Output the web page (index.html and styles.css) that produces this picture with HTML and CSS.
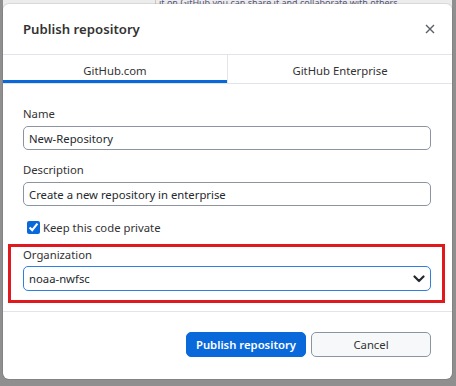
FILE: index.html
```html
<!DOCTYPE html>
<html lang="en">
<head>
    <meta charset="UTF-8">
    <meta name="viewport" content="width=device-width, initial-scale=1.0">
    <title>Publish repository</title>
    <link rel="stylesheet" href="styles.css">
</head>
<body>

<div class="backdrop">
    <div class="behind">
        <p>it on GitHub you can share it and collaborate with others.</p>
    </div>
</div>

<div class="dialog">
    <div class="dialog-header">
        <h1>Publish repository</h1>
        <button class="close" aria-label="Close">
            <svg width="10" height="10" viewBox="0 0 10 10">
                <path d="M1 1L9 9M9 1L1 9" stroke="#586069" stroke-width="1.4" fill="none"/>
            </svg>
        </button>
    </div>

    <div class="tabs">
        <div class="tab active">GitHub.com</div>
        <div class="tab">GitHub Enterprise</div>
    </div>

    <div class="dialog-body">
        <label class="field-label" for="name">Name</label>
        <input class="text-input" id="name" type="text" value="New-Repository">

        <label class="field-label" for="description">Description</label>
        <input class="text-input" id="description" type="text" value="Create a new repository in enterprise">

        <label class="check-row">
            <input type="checkbox" checked>
            <span>Keep this code private</span>
        </label>

        <div class="highlight">
            <label class="field-label" for="org">Organization</label>
            <div class="select">
                <span>noaa-nwfsc</span>
                <svg width="12" height="8" viewBox="0 0 12 8">
                    <path d="M1.5 1.5L6 6L10.5 1.5" stroke="#24292e" stroke-width="2.2" fill="none" stroke-linecap="round" stroke-linejoin="round"/>
                </svg>
            </div>
        </div>
    </div>

    <div class="dialog-footer">
        <button class="btn btn-primary">Publish repository</button>
        <button class="btn">Cancel</button>
    </div>
</div>

</body>
</html>
```

FILE: styles.css
```css
body {
    margin: 0;
    font-family: "Noto Sans", "Open Sans", sans-serif;
    font-size: 11.3px;
    color: #24292e;
    background: #8f8f8f;
}
.backdrop {
    height: 386px;
    padding: 0 4px 0 3px;
}
.behind {
    height: 10px;
    overflow: hidden;
    background: #ececec;
}
.behind p {
    margin: -3px 0 0 152px;
    font-size: 9px;
    line-height: 12px;
    white-space: nowrap;
    color: #55557a;
    border-left: 1px solid #c8c8c8;
    padding-left: 3px;
}
.dialog {
    position: absolute;
    left: 3px;
    top: 4px;
    width: 449px;
    height: 375px;
    background: #fff;
    border-radius: 6px;
    box-shadow: 0 0 0 1px rgba(0, 0, 0, 0.08);
    display: flex;
    flex-direction: column;
}
.dialog-header {
    height: 50px;
    display: flex;
    align-items: center;
    justify-content: space-between;
    padding: 0 15px 0 20px;
    border-bottom: 1px solid #e1e4e8;
}
.dialog-header h1 {
    margin: 0;
    font-size: 13.2px;
    font-weight: 600;
    color: #333;
}
.close {
    border: none;
    background: none;
    padding: 0;
    width: 14px;
    height: 14px;
    display: flex;
    align-items: center;
    justify-content: center;
}
.tabs {
    display: flex;
    height: 28px;
    border-bottom: 1px solid #e1e4e8;
}
.tab {
    flex: 1;
    display: flex;
    align-items: center;
    justify-content: center;
    color: #333;
    padding-top: 2px;
}
.tab.active {
    flex: 0 0 224px;
    border-right: 1px solid #e1e4e8;
    box-shadow: inset 0 -3px 0 #0969da;
}
.dialog-body {
    padding: 22px 21px 0 20px;
    display: flex;
    flex-direction: column;
    height: 228px;
    border-bottom: 1px solid #e1e4e8;
    box-sizing: border-box;
}
.field-label {
    line-height: 16px;
    color: #333;
    margin-bottom: 4px;
}
.text-input {
    height: 24px;
    box-sizing: border-box;
    border: 1px solid #8c959f;
    border-radius: 5px;
    padding: 0 5px;
    font: inherit;
    color: #24292e;
    margin-bottom: 12px;
}
.check-row {
    display: flex;
    align-items: center;
    gap: 3px;
    margin: 2px 0 9px 4px;
    color: #333;
}
.check-row input {
    width: 13px;
    height: 13px;
    margin: 0;
    accent-color: #0969da;
}
.highlight {
    margin: 0 -14px 0 -15px;
    border: 3px solid #e0191e;
    padding: 0 11px 9px 12px;
    display: flex;
    flex-direction: column;
}
.highlight .field-label {
    margin-bottom: 3px;
}
.select {
    height: 25px;
    box-sizing: border-box;
    border: 1px solid #2f7fe0;
    border-radius: 5px;
    display: flex;
    align-items: center;
    justify-content: space-between;
    padding: 0 5px 0 5px;
}
.dialog-footer {
    flex: 1;
    display: flex;
    justify-content: flex-end;
    align-items: flex-start;
    gap: 5px;
    padding: 20px 21px 0 0;
}
.btn {
    width: 120px;
    height: 25px;
    border: 1px solid #8c959f;
    border-radius: 5px;
    background: #f6f8fa;
    font: inherit;
    color: #333;
    white-space: nowrap;
    padding: 0;
    cursor: pointer;
}
.btn-primary {
    background: #0969da;
    border-color: #0969da;
    color: #fff;
    font-weight: 600;
}
```
